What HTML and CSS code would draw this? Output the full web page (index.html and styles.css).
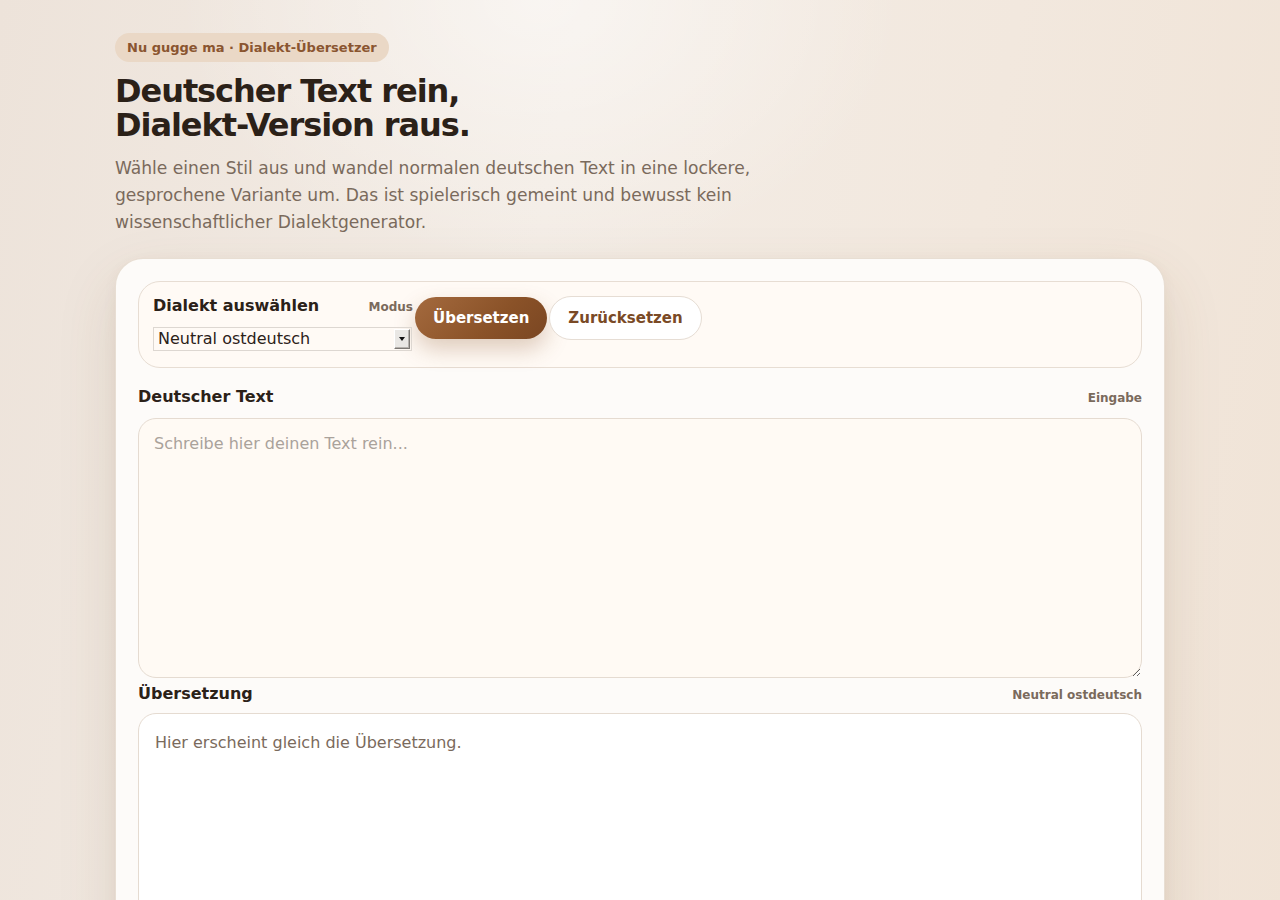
FILE: index.html
```html
<!DOCTYPE html>
<html lang="de">
<head>
<meta charset="utf-8">
<title>Nu gugge ma · Dialekt-Übersetzer</title>
<link rel="stylesheet" href="styles.css">
</head>
<body>
<main class="page">
  <header class="hero">
    <span class="badge">Nu gugge ma · Dialekt-Übersetzer</span>
    <h1 class="title">Deutscher Text rein,<br>Dialekt-Version raus.</h1>
    <p class="lead">Wähle einen Stil aus und wandel normalen deutschen Text in eine lockere, gesprochene Variante um. Das ist spielerisch gemeint und bewusst kein wissenschaftlicher Dialektgenerator.</p>
  </header>

  <section class="card">
    <div class="controls">
      <div class="field">
        <div class="field-head">
          <label class="field-label" for="dialect">Dialekt auswählen</label>
          <span class="field-hint">Modus</span>
        </div>
        <div class="select-wrap">
          <select id="dialect" class="select">
            <option>Neutral ostdeutsch</option>
            <option>Sächsisch</option>
            <option>Berlinerisch</option>
          </select>
          <span class="select-arrow" aria-hidden="true"><span class="select-tri"></span></span>
        </div>
      </div>
      <div class="actions">
        <button class="btn btn-primary" type="button">Übersetzen</button>
        <button class="btn btn-secondary" type="button">Zurücksetzen</button>
      </div>
    </div>

    <div class="block-head">
      <span class="block-title">Deutscher Text</span>
      <span class="block-meta">Eingabe</span>
    </div>
    <textarea class="input" placeholder="Schreibe hier deinen Text rein..."></textarea>

    <div class="block-head block-head-out">
      <span class="block-title">Übersetzung</span>
      <span class="block-meta">Neutral ostdeutsch</span>
    </div>
    <div class="output">Hier erscheint gleich die Übersetzung.</div>
  </section>
</main>
</body>
</html>
```

FILE: styles.css
```css
* { box-sizing: border-box; }

html, body {
  margin: 0;
  min-height: 100%;
}

body {
  font-family: "DejaVu Sans", "Noto Sans", sans-serif;
  color: #2b2118;
  background:
    radial-gradient(ellipse 520px 380px at 540px 0px, rgba(255, 255, 255, 0.5), rgba(255, 255, 255, 0) 70%),
    linear-gradient(100deg, #ede3da 0%, #f3ece5 40%, #f2e8de 70%, #f0e3d6 100%);
  min-height: 900px;
  overflow: hidden;
}

.page {
  max-width: 1050px;
  margin: 0 auto;
  padding-top: 33px;
}

.hero {
  display: flex;
  flex-direction: column;
  align-items: flex-start;
}

.badge {
  display: inline-block;
  padding: 7px 12px;
  border-radius: 999px;
  background: #ead8c6;
  color: #8a5530;
  font-size: 13px;
  font-weight: 700;
  line-height: 15px;
}

.title {
  margin: 12px 0 0;
  font-size: 32px;
  line-height: 34px;
  font-weight: 700;
  letter-spacing: -0.033em;
  color: #2b2118;
}

.lead {
  margin: 13px 0 0;
  max-width: 660px;
  font-size: 17.1px;
  line-height: 27px;
  color: #7a6a5c;
}

.card {
  margin-top: 22px;
  background: #fdfbf9;
  border: 1px solid rgba(230, 218, 206, 0.9);
  border-radius: 28px;
  padding: 22px 22px 40px;
  box-shadow: 0 24px 60px rgba(110, 75, 40, 0.13), 0 4px 14px rgba(110, 75, 40, 0.05);
  min-height: 700px;
}

.controls {
  display: flex;
  align-items: flex-start;
  gap: 2px;
  padding: 14px 14px 16px;
  border: 1px solid #e7ddd3;
  border-radius: 22px;
  background: #fffaf5;
}

.field {
  width: 260px;
  display: flex;
  flex-direction: column;
}

.field-head {
  display: flex;
  justify-content: space-between;
  align-items: baseline;
  height: 19px;
  margin-bottom: 12px;
}

.field-label {
  font-size: 16px;
  font-weight: 700;
  color: #2b2118;
}

.field-hint {
  font-size: 12px;
  font-weight: 700;
  color: #7a6a5c;
}

.select-wrap {
  position: relative;
  width: 259px;
  height: 24px;
}

.select {
  -webkit-appearance: none;
  appearance: none;
  display: block;
  width: 100%;
  height: 24px;
  margin: 0;
  padding: 0 22px 0 4px;
  border: 1px solid #ddd7d1;
  border-radius: 0;
  background: transparent;
  font-family: "DejaVu Sans", sans-serif;
  font-size: 16px;
  line-height: 22px;
  color: #2b2118;
  outline: none;
}

.select-arrow {
  position: absolute;
  right: 2px;
  top: 2px;
  width: 16px;
  height: 20px;
  background: #e9e7e4;
  border-top: 1px solid #ffffff;
  border-left: 1px solid #ffffff;
  border-right: 1px solid #7d7975;
  border-bottom: 1px solid #7d7975;
  box-shadow: inset -1px -1px 0 #b5b1ad;
  display: flex;
  align-items: center;
  justify-content: center;
  pointer-events: none;
}

.select-tri {
  width: 0;
  height: 0;
  border-left: 3px solid transparent;
  border-right: 3px solid transparent;
  border-top: 4px solid #111111;
}

.actions {
  display: flex;
  align-items: center;
  gap: 2px;
}

.btn {
  font-family: "DejaVu Sans", sans-serif;
  font-size: 15px;
  font-weight: 700;
  line-height: 18px;
  padding: 12px 18px;
  border-radius: 999px;
  cursor: pointer;
}

.btn-primary {
  border: 0;
  color: #ffffff;
  background: linear-gradient(135deg, #a46a3e 0%, #8a5228 60%, #7a4622 100%);
  box-shadow: 0 10px 22px rgba(138, 82, 40, 0.28);
}

.btn-secondary {
  border: 1px solid #e6ddd4;
  color: #7a4a26;
  background: #ffffff;
}

.block-head {
  display: flex;
  justify-content: space-between;
  align-items: baseline;
  height: 20px;
  margin-top: 19px;
  margin-bottom: 11px;
}

.block-head-out {
  margin-top: 6px;
  margin-bottom: 9px;
}

.block-title {
  font-size: 16px;
  font-weight: 700;
  color: #2b2118;
}

.block-meta {
  font-size: 12px;
  font-weight: 700;
  color: #7a6a5c;
}

.input {
  display: block;
  width: 100%;
  height: 260px;
  padding: 15px;
  border: 1px solid #e5dbd1;
  border-radius: 18px;
  background: #fffaf4;
  font-family: "DejaVu Sans", sans-serif;
  font-size: 16px;
  color: #2b2118;
  outline: none;
}

.input::placeholder {
  color: #aaa29b;
}

.output {
  min-height: 240px;
  padding: 16px;
  border: 1px solid #e5dbd1;
  border-radius: 18px;
  background: #ffffff;
  font-size: 16px;
  line-height: 1.6;
  color: #7a6a5c;
}
```
